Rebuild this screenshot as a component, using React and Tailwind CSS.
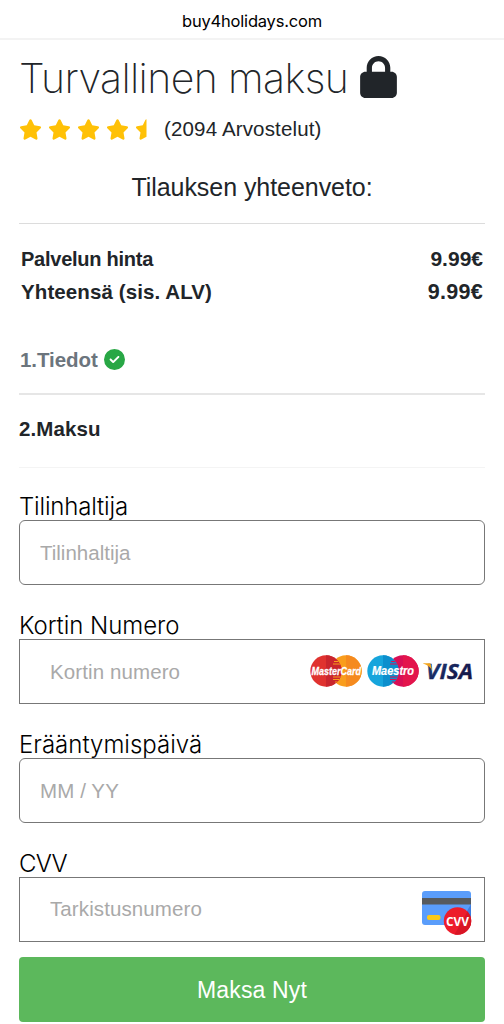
import React from 'react';
import { FaCircleCheck, FaLock, FaStar, FaStarHalf } from 'react-icons/fa6';

const SANS = "font-['Liberation_Sans',Arial,sans-serif]";

function CardLogos() {
  return (
    <svg className="-mt-px" width="164" height="34" viewBox="0 0 164 34">
      <defs>
        <clipPath id="mcLeft"><circle cx="16" cy="17" r="15.7" /></clipPath>
        <clipPath id="msLeft"><circle cx="73" cy="17" r="15.7" /></clipPath>
        <linearGradient id="visa" x1="0" y1="0" x2="1" y2="1">
          <stop offset="0" stopColor="#1d4f8f" />
          <stop offset="0.6" stopColor="#171d52" />
          <stop offset="1" stopColor="#14133d" />
        </linearGradient>
      </defs>

      {/* MasterCard */}
      <circle cx="36" cy="17" r="15.7" fill="#f99d1c" />
      <path d="M36 1.3a15.7 15.7 0 0 1 0 31.4z" fill="#f58a1f" />
      <circle cx="16" cy="17" r="15.7" fill="#e0322f" />
      <path d="M16 1.3a15.7 15.7 0 0 1 0 31.4z" fill="#c9252d" />
      <path d="M24 7.5h8M23 10h9M23 23h9M23 25.5h8M25 28h5" stroke="#f99d1c" strokeWidth="1" clipPath="url(#mcLeft)" />
      <text x="1.5" y="20.8" textLength="49.5" lengthAdjust="spacingAndGlyphs" fontSize="11.5" fontWeight="700" fontStyle="italic" fill="#fff" stroke="#fff" strokeWidth="0.3" fontFamily="Liberation Sans, sans-serif">MasterCard</text>

      {/* Maestro */}
      <circle cx="93" cy="17" r="15.7" fill="#d80f55" />
      <path d="M93 1.3a15.7 15.7 0 0 1 0 31.4z" fill="#e3154c" />
      <circle cx="73" cy="17" r="15.7" fill="#16a5dc" />
      <path d="M73 1.3a15.7 15.7 0 0 1 0 31.4z" fill="#0c8fcd" />
      <path d="M81 7.5h8M80 10h9M80 23h9M80 25.5h8M82 28h5" stroke="#d80f55" strokeWidth="1" clipPath="url(#msLeft)" />
      <text x="62" y="20.8" textLength="42" lengthAdjust="spacingAndGlyphs" fontSize="12" fontWeight="700" fontStyle="italic" fill="#fff" stroke="#fff" strokeWidth="0.2" fontFamily="Liberation Sans, sans-serif">Maestro</text>

      {/* Visa */}
      <text x="116" y="24.8" textLength="47" lengthAdjust="spacingAndGlyphs" fontSize="21.5" fontWeight="700" fontStyle="italic" fill="url(#visa)" stroke="#171d52" strokeWidth="0.3" fontFamily="Open Sans, sans-serif">VISA</text>
      <path d="M113 9.3h6.2c1 0 1.4.5 1.6 1.4l1.3 6.2c-1.5-3.5-4.6-6-9.1-7.3z" fill="#f3a51c" />
    </svg>
  );
}

function CvvIcon() {
  return (
    <svg className="mt-[6px]" width="52" height="46" viewBox="0 0 52 46">
      <rect x="1" y="1" width="49" height="34" rx="3" fill="#5a9dfb" />
      <path d="M50 14v18a3 3 0 0 1-3 3h-9z" fill="#3d7de0" />
      <rect x="1" y="8" width="49" height="6.5" fill="#565a5e" />
      <rect x="6" y="25" width="13.5" height="5" rx="2" fill="#fcc917" />
      <circle cx="36.5" cy="31" r="13.7" fill="#ed1c2b" />
      <path d="M46.5 21.6a13.7 13.7 0 0 1-13 22.8z" fill="#d81525" />
      <text x="25" y="35.5" textLength="23" lengthAdjust="spacingAndGlyphs" fontSize="12" fontWeight="700" fill="#fff" fontFamily="Open Sans, sans-serif">CVV</text>
    </svg>
  );
}

function Field({ label, labelClass, placeholder, inputClass, boxClass, children }) {
  return (
    <div className="h-[119px]">
      <label className="flex h-[28px] items-center whitespace-nowrap pt-[2px] font-['Inter',sans-serif] text-[24px] font-light text-black">
        <span className={labelClass}>{label}</span>
      </label>
      <div className={`flex h-[65px] items-center justify-between border border-[#777] bg-white ${boxClass}`}>
        <input
          type="text"
          placeholder={placeholder}
          className={`w-0 min-w-0 flex-1 bg-transparent text-[20.5px] outline-none placeholder:text-[#a9a9a9] ${inputClass}`}
        />
        {children}
      </div>
    </div>
  );
}

export default function App() {
  return (
    <div className={`h-[1024px] w-[504px] overflow-hidden bg-white text-[#212529] ${SANS}`}>
      <header className="flex h-[40px] items-center justify-center border-b-2 border-[#f3f3f3] pt-[5px] font-['Inter',sans-serif] text-[16.5px] text-black">
        <span className="tracking-[-0.2px]">buy4holidays.com</span>
      </header>

      <main className="px-[19px]">
        <h1 className="flex h-[74px] items-center whitespace-nowrap font-['Inter',sans-serif] text-[41px] font-[250]">
          <span className="w-[341px] pt-[3px] tracking-[-0.6px]">Turvallinen maksu</span>
          <FaLock className="h-[42px] w-[37px]" />
        </h1>

        <div className="flex h-[30px] items-center">
          <div className="flex gap-[6px] text-[#ffc107]">
            <FaStar className="h-[21px] w-[23px]" />
            <FaStar className="h-[21px] w-[23px]" />
            <FaStar className="h-[21px] w-[23px]" />
            <FaStar className="h-[21px] w-[23px]" />
            <FaStarHalf className="h-[21px] w-[23px]" />
          </div>
          <span className="ml-[6px] text-[20.5px] tracking-[0.15px]">(2094 Arvostelut)</span>
        </div>

        <h2 className="flex h-[80px] items-center justify-center border-b border-[#dcdcdc] pt-[8px] text-[25px]">
          <span className="tracking-[-0.05px]">Tilauksen yhteenveto:</span>
        </h2>

        <div className="px-[2px] pt-[18px] text-[20px] font-bold">
          <div className="flex h-[33px] items-center justify-between">
            <span className="tracking-[-0.25px]">Palvelun hinta</span>
            <span className="text-[21px]">9.99€</span>
          </div>
          <div className="flex h-[34px] items-center justify-between">
            <span className="text-[20.5px] tracking-[0.1px]">Yhteensä (sis. ALV)</span>
            <span className="text-[21.5px] tracking-[0.3px]">9.99€</span>
          </div>
        </div>

        <div className="flex h-[86px] items-end border-b-2 border-[#e6e6e6] pb-[17px] pl-px text-[20.5px] font-bold text-[#6c757d]">
          <span className="tracking-[-0.05px]">1.Tiedot</span>
          <FaCircleCheck className="mb-[6px] ml-[6px] size-[21px] text-[#28a745]" />
        </div>
        <div className="flex h-[73px] items-center border-b border-[#f4f4f4] pb-[4px] text-[20.5px] font-bold">
          <span className="tracking-[0.1px]">2.Maksu</span>
        </div>

        <form className="pt-[24px]">
          <Field label="Tilinhaltija" labelClass="tracking-[-0.18px]" placeholder="Tilinhaltija" boxClass="rounded-[6px]" inputClass="pl-[20px] pt-px" />
          <Field label="Kortin Numero" labelClass="tracking-[-0.06px]" placeholder="Kortin numero" inputClass="pl-[30px] pt-px tracking-[0.1px]" boxClass="pr-[10px]">
            <CardLogos />
          </Field>
          <Field label="Erääntymispäivä" placeholder="MM / YY" boxClass="rounded-[6px]" inputClass="pl-[20px] pt-px tracking-[0.1px]" />
          <Field label="CVV" labelClass="tracking-[-0.8px]" placeholder="Tarkistusnumero" inputClass="pl-[30px] pb-px tracking-[0.1px]" boxClass="pr-[11px]">
            <CvvIcon />
          </Field>
          <button type="button" className="-mt-[11px] flex h-[65px] w-full items-center justify-center rounded-[4px] bg-[#5cb85c] pt-px text-[23px] text-white">
            <span className="tracking-[0.15px]">Maksa Nyt</span>
          </button>
        </form>
      </main>
    </div>
  );
}
